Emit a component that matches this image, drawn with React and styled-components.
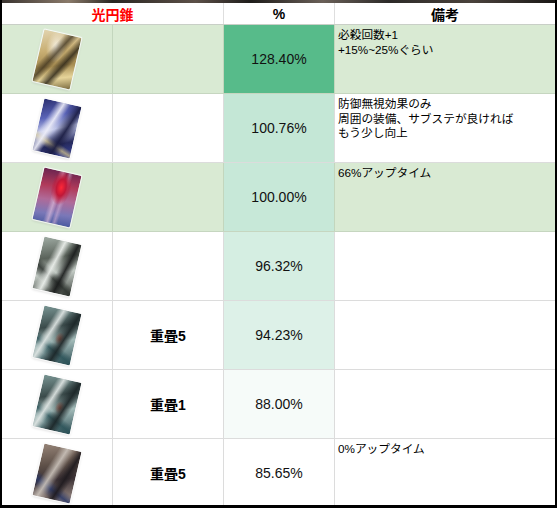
import React from 'react'
import styled, { createGlobalStyle } from 'styled-components'

const GlobalStyle = createGlobalStyle`
  html, body {
    margin: 0;
    padding: 0;
    background: #000;
  }
  body {
    font-family: 'Liberation Sans', 'Noto Sans CJK JP', sans-serif;
  }
`

const Frame = styled.div`
  width: 557px;
  height: 508px;
  box-sizing: border-box;
  padding: 0 2px 3px 2px;
  background: #000;
  display: flex;
  flex-direction: column;
  overflow: hidden;
`

const TopStrip = styled.div`
  height: 3px;
  flex: none;
  background: linear-gradient(
    90deg,
    #3a3430 0%,
    #8a7a6a 12%,
    #2a2622 20%,
    #5c5048 35%,
    #1e1c1a 45%,
    #6a6058 58%,
    #2c2a28 70%,
    #4a423c 85%,
    #1a1816 100%
  );
`

const Sheet = styled.div`
  flex: 1;
  overflow: hidden;
  background: #fff;
`

const Grid = styled.div`
  display: grid;
  grid-template-columns: 111px 111px 111px 1fr;
`

const HeaderRow = styled(Grid)`
  height: 22px;
  border-bottom: 1px solid #c9cfc7;
  box-sizing: border-box;
`

const HeadCell = styled.div`
  grid-column: span ${(p) => p.$span || 1};
  display: flex;
  align-items: center;
  justify-content: center;
  font-weight: bold;
  font-size: 14px;
  color: ${(p) => p.$color || '#000'};
  border-right: ${(p) => (p.$last ? 'none' : '1px solid #dedede')};
  box-sizing: border-box;
`

const Row = styled(Grid)`
  height: 69px;
  box-sizing: border-box;
  border-bottom: 1px solid ${(p) => (p.$tint ? '#c6d6c0' : '#dcdcdc')};
  background: ${(p) => (p.$tint ? '#d9ead3' : '#fff')};
`

const Cell = styled.div`
  box-sizing: border-box;
  border-right: 1px solid ${(p) => (p.$tint ? '#c3d6bd' : '#dcdcdc')};
  display: flex;
  align-items: center;
  justify-content: center;
  min-width: 0;
`

const ThumbCell = styled(Cell)`
  overflow: hidden;
`

const Card = styled.div`
  width: 38px;
  height: 53px;
  transform: rotate(13deg);
  border-radius: 1px;
  background: ${(p) => p.$art};
  box-shadow: 0 0 1px 1px rgba(255, 255, 255, 0.9), 0 1px 3px rgba(0, 0, 0, 0.2);
`

const Stack = styled(Cell)`
  font-weight: bold;
  font-size: 14px;
  color: #000;
`

const Percent = styled(Cell)`
  font-size: 14px;
  color: #111;
  background: ${(p) => p.$bg};
`

const Note = styled.div`
  padding: 3px 3px 0 3px;
  font-size: 11.7px;
  line-height: 14.7px;
  color: #000;
  white-space: pre-line;
  overflow: hidden;
`

// soft painterly fills for the card thumbnails
const arts = {
  gold: `linear-gradient(120deg, transparent 30%, rgba(50,40,24,0.7) 42%, transparent 52%, rgba(40,34,22,0.8) 64%, transparent 74%),
    radial-gradient(ellipse at 40% 26%, #f6f0e0 0, rgba(246,240,224,0) 30%),
    linear-gradient(160deg, #e2d4b0 0%, #c8ae72 35%, #a48a50 60%, #e6d49a 80%, #7a6a40 100%)`,
  blue: `linear-gradient(110deg, transparent 22%, rgba(240,240,250,0.9) 36%, transparent 48%, rgba(24,26,64,0.9) 66%, transparent 80%),
    linear-gradient(20deg, transparent 15%, rgba(216,200,136,0.7) 24%, transparent 32%),
    linear-gradient(155deg, #2a2e6e 0%, #5a64b8 30%, #c0c6e8 50%, #262a5c 75%, #3a46a0 100%)`,
  red: `radial-gradient(ellipse at 55% 30%, #ff2838 0, #c01838 16%, rgba(160,20,50,0) 34%),
    linear-gradient(95deg, transparent 35%, rgba(216,184,216,0.7) 46%, transparent 55%, rgba(200,168,208,0.6) 62%, transparent 70%),
    linear-gradient(175deg, #6a2450 0%, #b03a5a 30%, #b06a98 55%, #7a78b8 80%, #4a5aa0 100%)`,
  grey: `linear-gradient(105deg, transparent 28%, rgba(238,242,238,0.9) 42%, transparent 54%, rgba(24,26,26,0.9) 68%, transparent 82%),
    linear-gradient(30deg, transparent 18%, rgba(42,48,44,0.8) 32%, transparent 42%),
    linear-gradient(160deg, #a0aca4 0%, #5a625a 35%, #c4ccc6 60%, #3a403a 100%)`,
  teal: `linear-gradient(110deg, transparent 24%, rgba(226,232,230,0.9) 36%, transparent 48%, rgba(26,36,38,0.9) 65%, transparent 78%),
    radial-gradient(ellipse at 60% 55%, rgba(168,80,60,0.9) 0, rgba(168,80,60,0) 16%),
    linear-gradient(25deg, transparent 15%, rgba(42,82,88,0.8) 28%, transparent 38%),
    linear-gradient(160deg, #7a9694 0%, #3a4a4a 35%, #a4bcba 60%, #2c4c52 100%)`,
  brown: `linear-gradient(110deg, transparent 28%, rgba(202,194,186,0.9) 42%, transparent 56%, rgba(30,26,30,0.9) 68%, transparent 80%),
    linear-gradient(25deg, transparent 12%, rgba(42,56,102,0.85) 25%, transparent 36%),
    linear-gradient(160deg, #968478 0%, #5e5048 35%, #3a3034 60%, #a89890 100%)`,
}

const rows = [
  { art: arts.gold, tint: true, stack: '', pct: '128.40%', bg: '#57bb8a', note: '必殺回数+1\n+15%~25%ぐらい' },
  { art: arts.blue, stack: '', pct: '100.76%', bg: '#c4e7d6', note: '防御無視効果のみ\n周囲の装備、サブステが良ければ\nもう少し向上' },
  { art: arts.red, tint: true, stack: '', pct: '100.00%', bg: '#c7e8d8', note: '66%アップタイム' },
  { art: arts.grey, stack: '', pct: '96.32%', bg: '#d5eee2', note: '' },
  { art: arts.teal, stack: '重畳5', pct: '94.23%', bg: '#ddf1e8', note: '' },
  { art: arts.teal, stack: '重畳1', pct: '88.00%', bg: '#f6fbf9', note: '' },
  { art: arts.brown, stack: '重畳5', pct: '85.65%', bg: '#ffffff', note: '0%アップタイム' },
]

const App = () => {
  return (
    <>
      <GlobalStyle />
      <Frame>
        <TopStrip />
        <Sheet>
          <HeaderRow>
            <HeadCell $span={2} $color='#ff0000'>光円錐</HeadCell>
            <HeadCell>%</HeadCell>
            <HeadCell $last>備考</HeadCell>
          </HeaderRow>
          {rows.map((r, i) => (
            <Row key={i} $tint={r.tint}>
              <ThumbCell $tint={r.tint}>
                <Card $art={r.art} />
              </ThumbCell>
              <Stack $tint={r.tint}>{r.stack}</Stack>
              <Percent $tint={r.tint} $bg={r.bg}>{r.pct}</Percent>
              <Note>{r.note}</Note>
            </Row>
          ))}
        </Sheet>
      </Frame>
    </>
  )
}

export default App
